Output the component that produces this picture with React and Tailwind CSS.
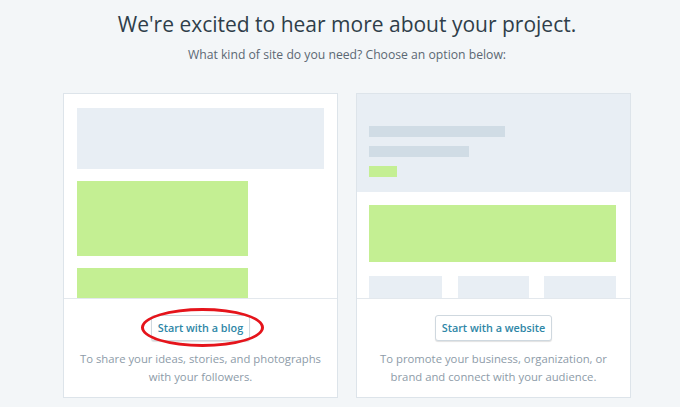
import React from "react";

// Choice card with a small wireframe preview on top
function ChoiceCard({ preview, label, text, circled }) {
  return (
    <div className="flex h-[305px] w-[275px] flex-col border border-[#dde4ea] bg-white">
      <div className="h-[205px] overflow-hidden border-b border-[#e3e8ed]">{preview}</div>
      <div className="flex flex-1 flex-col items-center pt-[15px]">
        <div className="relative">
          <button className="h-[26px] rounded-[3px] border border-[#cfd8df] bg-white px-[6px] text-[10.8px] font-semibold text-[#2e86a6] shadow-[0_1px_1px_rgba(0,0,0,0.12)]">
            {label}
          </button>
          {circled && (
            <div className="absolute -left-[10px] -right-[14px] -top-[6px] -bottom-[6px] rounded-[50%] border-[3px] border-[#e5141b]" />
          )}
        </div>
        <p className="mt-[9px] text-center text-[11.3px] leading-[18px] text-[#8d9ba8]">{text}</p>
      </div>
    </div>
  );
}

function BlogPreview() {
  return (
    <div className="flex flex-col gap-[12px] pl-[13px] pr-[13px] pt-[14px]">
      <div className="h-[61px] bg-[#e8eef4]" />
      <div className="h-[75px] w-[171px] bg-[#c4ef93]" />
      <div className="h-[40px] w-[171px] bg-[#c4ef93]" />
    </div>
  );
}

function SitePreview() {
  return (
    <div className="flex flex-col">
      <div className="flex h-[98px] flex-col gap-[9px] bg-[#e8eef4] px-[12px] pt-[32px]">
        <div className="h-[11px] w-[136px] bg-[#d0dce5]" />
        <div className="h-[11px] w-[100px] bg-[#d0dce5]" />
        <div className="h-[11px] w-[28px] bg-[#c4ef93]" />
      </div>
      <div className="flex flex-col gap-[14px] pl-[12px] pr-[14px] pt-[13px]">
        <div className="h-[57px] bg-[#c4ef93]" />
        <div className="flex justify-between">
          <div className="h-[30px] w-[73px] bg-[#e8eef4]" />
          <div className="h-[30px] w-[71px] bg-[#e8eef4]" />
          <div className="h-[30px] w-[72px] bg-[#e8eef4]" />
        </div>
      </div>
    </div>
  );
}

export default function App() {
  return (
    <div className="flex h-[407px] w-[680px] flex-col items-center overflow-hidden bg-[#f3f6f8] pl-[14px] font-['Open_Sans',sans-serif]">
      <h1 className="mt-[8px] text-[21px] leading-[32px] text-[#2f3e4a]">
        We're excited to hear more about your project.
      </h1>
      <p className="mt-[7px] text-[12.2px] leading-[16px] text-[#5c6873]">
        What kind of site do you need? Choose an option below:
      </p>
      <div className="mt-[30px] flex gap-[18px]">
        <ChoiceCard
          preview={<BlogPreview />}
          label="Start with a blog"
          circled
          text={<>To share your ideas, stories, and photographs<br />with your followers.</>}
        />
        <ChoiceCard
          preview={<SitePreview />}
          label="Start with a website"
          text={<>To promote your business, organization, or<br />brand and connect with your audience.</>}
        />
      </div>
    </div>
  );
}
